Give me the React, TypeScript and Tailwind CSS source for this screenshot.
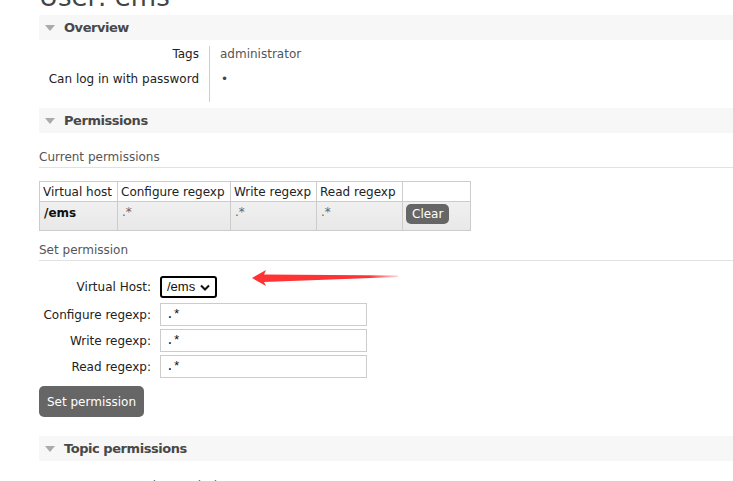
import React from 'react'

const ROWS = [
  { label: 'Configure regexp:', value: '.*' },
  { label: 'Write regexp:', value: '.*' },
  { label: 'Read regexp:', value: '.*' },
]

const COLS = [
  { title: 'Virtual host', w: 'w-[78px]' },
  { title: 'Configure regexp', w: 'w-[113px]' },
  { title: 'Write regexp', w: 'w-[86px]' },
  { title: 'Read regexp', w: 'w-[86px]' },
]

function SectionHeader({ title }: { title: string }) {
  return (
    <div className="flex items-center h-[25px] bg-[#f7f7f7] pl-[6px]">
      <span className="w-0 h-0 border-l-[5px] border-r-[5px] border-t-[6px] border-l-transparent border-r-transparent border-t-[#aaa] mr-[9px]" />
      <span className="text-[13px] font-bold tracking-[-0.45px] text-[#484848]">{title}</span>
    </div>
  )
}

function SubHeading({ title }: { title: string }) {
  return (
    <div className="text-[12px] leading-[15px] text-[#555] border-b border-[#e2e2e2] pb-[2px]">{title}</div>
  )
}

export default function App() {
  return (
    <div className="relative w-[733px] h-[481px] overflow-hidden bg-white font-['DejaVu_Sans',Verdana,sans-serif] text-[12px] text-[#333]">
      <div className="pl-[39px] -mt-[20px]">
        <h1 className="text-[26px] leading-[34px] text-[#444] h-[35px]">User: ems</h1>

        <SectionHeader title="Overview" />
        <div className="flex pt-[6px] h-[62px]">
          <div className="w-[171px] flex flex-col items-end gap-[8px] pr-[10px] border-r border-[#ccc]">
            <span className="leading-[17px] text-[#222]">Tags</span>
            <span className="leading-[17px] text-[#222]">Can log in with password</span>
          </div>
          <div className="flex flex-col gap-[8px] pl-[10px]">
            <span className="leading-[17px] text-[#555]">administrator</span>
            <span className="leading-[17px] pl-[1px] text-[#444]">•</span>
          </div>
        </div>

        <div className="mt-[6px]">
          <SectionHeader title="Permissions" />
        </div>

        <div className="mt-[17px]">
          <SubHeading title="Current permissions" />
        </div>

        <table className="mt-[13px] border-collapse table-fixed text-[12px]">
          <thead>
            <tr className="h-[20px]">
              {COLS.map((c) => (
                <th key={c.title} className={`font-normal text-left whitespace-nowrap border border-[#ccc] px-[3px] text-[#222] ${c.w}`}>
                  {c.title}
                </th>
              ))}
              <th className="border border-[#ccc] w-[68px]" />
            </tr>
          </thead>
          <tbody>
            <tr className="h-[29px] bg-gradient-to-b from-[#f0f0f0] to-[#e8e8e8] align-top">
              <td className="border border-[#ccc] px-[4px] pt-[2px] font-bold text-[#111]">/ems</td>
              <td className="border border-[#ccc] px-[4px] pt-[1px] text-[#666]">.*</td>
              <td className="border border-[#ccc] px-[4px] pt-[1px] text-[#666]">.*</td>
              <td className="border border-[#ccc] px-[4px] pt-[1px] text-[#666]">.*</td>
              <td className="border border-[#ccc] px-[3px] pt-[2px]">
                <button className="bg-[#666] text-white rounded-[5px] h-[20px] px-[6px] text-[12px] leading-[20px]">Clear</button>
              </td>
            </tr>
          </tbody>
        </table>

        <div className="mt-[12px]">
          <SubHeading title="Set permission" />
        </div>

        <div className="mt-[15px] flex flex-col">
          <div className="flex items-center h-[22px] mb-[5px]">
            <label className="w-[112px] text-right text-[#222]">Virtual Host:</label>
            <div className="ml-[9px] flex items-center h-[22px] w-[57px] border-2 border-black rounded-[3px] px-[5px] font-['Liberation_Sans',Arial,sans-serif] text-[13px] text-[#111]">
              <span className="flex-1">/ems</span>
              <svg width="10" height="7" viewBox="0 0 10 7">
                <path d="M1 1.5 L5 5.5 L9 1.5" fill="none" stroke="#111" strokeWidth="2" />
              </svg>
            </div>
          </div>
          <div className="flex flex-col gap-[3px]">
            {ROWS.map((r) => (
              <div key={r.label} className="flex items-center h-[23px]">
                <label className="w-[112px] text-right text-[#222]">{r.label}</label>
                <div className="ml-[9px] h-[23px] w-[207px] border border-[#ccc] pl-[5px] flex items-center text-[13px] text-[#111] font-['Liberation_Mono',monospace] tracking-[-1px]">
                  {r.value}
                </div>
              </div>
            ))}
          </div>
        </div>

        <button className="mt-[8px] bg-[#666] text-white rounded-[5px] h-[31px] w-[105px] text-[12px]">Set permission</button>

        <div className="mt-[19px]">
          <SectionHeader title="Topic permissions" />
        </div>

        <p className="mt-[18px] pl-[60px] leading-[15px] text-[#555]">... no topic permissions ...</p>
      </div>

      {/* red arrow annotation */}
      <svg className="absolute left-[250px] top-[266px]" width="152" height="24" viewBox="0 0 152 24">
        <defs>
          <linearGradient id="fade" x1="0" x2="1" y1="0" y2="0">
            <stop offset="0" stopColor="#f33" />
            <stop offset="0.8" stopColor="#f33" />
            <stop offset="1" stopColor="#f33" stopOpacity="0.2" />
          </linearGradient>
        </defs>
        <path d="M2 12 L16 4 L14 8.5 L148 9.5 L148 11 L14 16 L16 20 Z" fill="url(#fade)" />
      </svg>
    </div>
  )
}
